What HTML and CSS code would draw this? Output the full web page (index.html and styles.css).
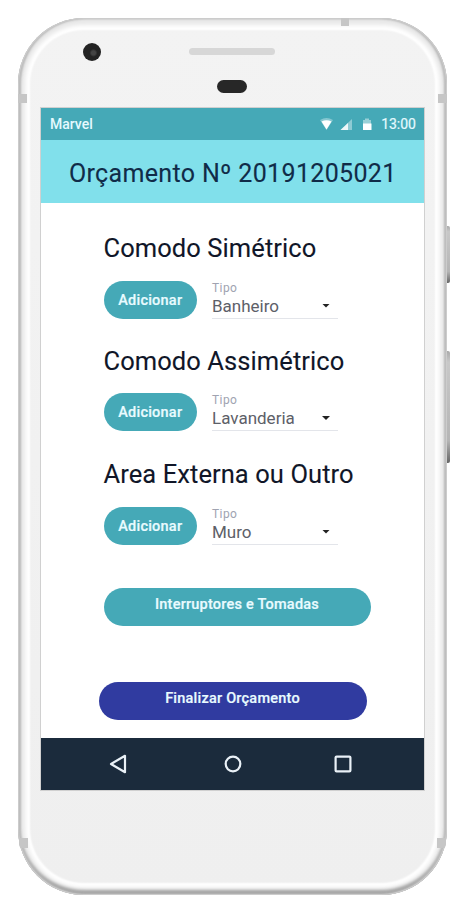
FILE: index.html
```html
<!DOCTYPE html>
<html lang="pt">
<head>
<meta charset="utf-8">
<title>Orçamento</title>
<link rel="stylesheet" href="styles.css">
</head>
<body>
<div class="phone">
  <i class="band band-top"></i><i class="band band-tl"></i><i class="band band-tr"></i><i class="band band-bl"></i><i class="band band-br"></i>
  <i class="key key-power"></i><i class="key key-volume"></i>
  <i class="camera"></i><i class="speaker"></i><i class="sensor"></i>
  <main class="screen">
    <div class="status">
      <span class="carrier">Marvel</span>
      <svg class="status-icons" width="54" height="14" viewBox="0 0 54 14">
        <path d="M0 3Q6.500-1 13 3L6.500 13Z" fill="#fff" opacity=".35"/>
        <path d="M1.500 4.500Q6.500 2 11.500 4.500L6.500 12.500Z" fill="#fff"/>
        <path d="M20.500 13L32 2V13Z" fill="#fff" opacity=".4"/>
        <path d="M20.500 13L28 6V13Z" fill="#fff" opacity=".85"/>
        <path d="M43 3H45V1.500H49V3H51V7H43Z" fill="#fff" opacity=".45"/>
        <path d="M43 6.500H51.500V13H43Z" fill="#fff"/>
      </svg>
      <span class="clock">13:00</span>
    </div>
    <header class="title"><h1>Orçamento Nº 20191205021</h1></header>
    <div class="content">
      <section class="room">
        <h2>Comodo Simétrico</h2>
        <div class="row"><button class="add">Adicionar</button>
          <div class="select"><span class="label">Tipo</span><span class="value">Banheiro<i class="caret"></i></span></div></div>
      </section>
      <section class="room">
        <h2>Comodo Assimétrico</h2>
        <div class="row"><button class="add">Adicionar</button>
          <div class="select"><span class="label">Tipo</span><span class="value">Lavanderia<i class="caret"></i></span></div></div>
      </section>
      <section class="room">
        <h2>Area Externa ou Outro</h2>
        <div class="row"><button class="add">Adicionar</button>
          <div class="select"><span class="label">Tipo</span><span class="value">Muro<i class="caret"></i></span></div></div>
      </section>
      <button class="wide switches">Interruptores e Tomadas</button>
      <button class="wide finish">Finalizar Orçamento</button>
    </div>
    <nav class="nav">
      <svg width="20" height="20" viewBox="0 0 20 20"><path d="M3 10L17 1.800V18.200Z"/></svg>
      <svg width="20" height="20" viewBox="0 0 20 20"><circle cx="10" cy="10" r="7.300"/></svg>
      <svg width="20" height="20" viewBox="0 0 20 20"><rect x="2.600" y="2.600" width="14.800" height="14.800" rx="1"/></svg>
    </nav>
  </main>
</div>
</body>
</html>
```
FILE: styles.css
```css
* { box-sizing: border-box; }
body { margin: 0; width: 455px; height: 900px; overflow: hidden; background: #fff; font-family: Roboto, "Liberation Sans", sans-serif; color: #101628; }
h1, h2 { margin: 0; font-weight: 400; white-space: nowrap; -webkit-text-stroke: .1px currentColor; }
button { border: 0; padding: 0; font: 500 14.5px/20px Roboto, sans-serif; letter-spacing: .22px; color: #e9fbff; white-space: nowrap; -webkit-text-stroke: .2px currentColor; }

.phone {
  position: relative; width: 429px; height: 877px; margin: 17.5px 0 0 17.5px; padding: 90.5px 22.5px 0 23px;
  border-radius: 66px;
  background: linear-gradient(#f3f3f3, #efefef);
  box-shadow: inset 0 0 0 1px #ccc, inset 2px 0 2px 1px #bdbdbd, inset -2px 0 2px 1px #bdbdbd, inset 0 -4px 3px 1px #a4a4a4, inset 0 0 4px 7px #e8e8e8, inset 0 0 2px 12px #fff;
}
.band { position: absolute; background: #c6c6c6; }
.band-top { left: 323px; top: 0; width: 8px; height: 8px; }
.band-tl { left: 0; top: 76px; width: 9px; height: 9px; }
.band-tr { right: 0; top: 76px; width: 9px; height: 9px; }
.band-bl { left: 1px; bottom: 47px; width: 9px; height: 10px; border-bottom-left-radius: 4px; }
.band-br { right: 1px; bottom: 47px; width: 9px; height: 10px; border-bottom-right-radius: 4px; }
.key { position: absolute; right: -3px; width: 3px; background: linear-gradient(#aaa, #c8c8c8 10%, #b5b5b5 80%, #666); border-radius: 0 2px 2px 0; }
.key-power { top: 208px; height: 57px; }
.key-volume { top: 333px; height: 112px; }
.camera { position: absolute; left: 65px; top: 25.5px; width: 18px; height: 18px; border-radius: 50%; background: radial-gradient(circle at 58% 55%, #444 0 2px, #232323 4px); }
.speaker { position: absolute; left: 171px; top: 30px; width: 86px; height: 7px; border-radius: 4px; background: #d7d7d7; }
.sensor { position: absolute; left: 199px; top: 62.5px; width: 30.5px; height: 13px; border-radius: 7px; background: #272727; }

.screen { display: flex; flex-direction: column; height: 682px; background: #fff; box-shadow: 0 0 0 1px #d0d0d0; }
.status { display: flex; align-items: center; height: 31.5px; flex: none; padding: 0 8px 0 9.5px; background: #45a9b7; color: #e5faff; font-size: 14px; }
.carrier { font-weight: 500; }
.status-icons { margin-left: auto; margin-right: 7.5px; }
.clock { font-size: 14px; -webkit-text-stroke: .2px currentColor; }
.title { height: 63.5px; flex: none; padding-left: 28.5px; background: #81e0eb; color: #102b48; }
.title h1 { font-size: 25px; line-height: 68px; letter-spacing: .34px; }
.content { flex: 1; display: flex; flex-direction: column; padding-left: 63px; padding-top: 29px; }
.room { height: 112.5px; flex: none; }
.room + .room + .room { padding-top: 1px; }
.room h2 { height: 48.5px; font-size: 25.5px; line-height: 33px; letter-spacing: .08px; }
.row { display: flex; gap: 15px; }
.add { width: 93.5px; height: 38px; padding-top: 2px; border-radius: 19px; background: #45a9b7; }
.select { width: 126px; height: 38px; border-bottom: 1.5px solid #e3e5ea; display: flex; flex-direction: column; }
.label { height: 15px; font-size: 12px; line-height: 14px; color: #a0a3b1; letter-spacing: .4px; }
.value { display: flex; justify-content: space-between; align-items: center; font-size: 17px; line-height: 21px; color: #5d6068; padding-right: 8px; }
.caret { width: 8px; height: 4px; margin-top: -1px; background: #222; clip-path: polygon(0 0, 100% 0, 50% 100%); }
.wide { height: 38px; flex: none; border-radius: 19px; padding-bottom: 4px; }
.switches { width: 267px; margin-top: 18.5px; background: #45a9b7; }
.finish { width: 268px; margin: 56px 0 0 -5px; background: #303ba0; }
.nav { height: 52px; flex: none; display: flex; align-items: center; padding-left: 67.5px; background: #1b2b3c; }
.nav svg { fill: none; stroke: #eaf1f7; stroke-width: 2.2; stroke-linejoin: round; }
.nav svg + svg { margin-left: 95px; }
.nav svg + svg + svg { margin-left: 89.5px; }
```
